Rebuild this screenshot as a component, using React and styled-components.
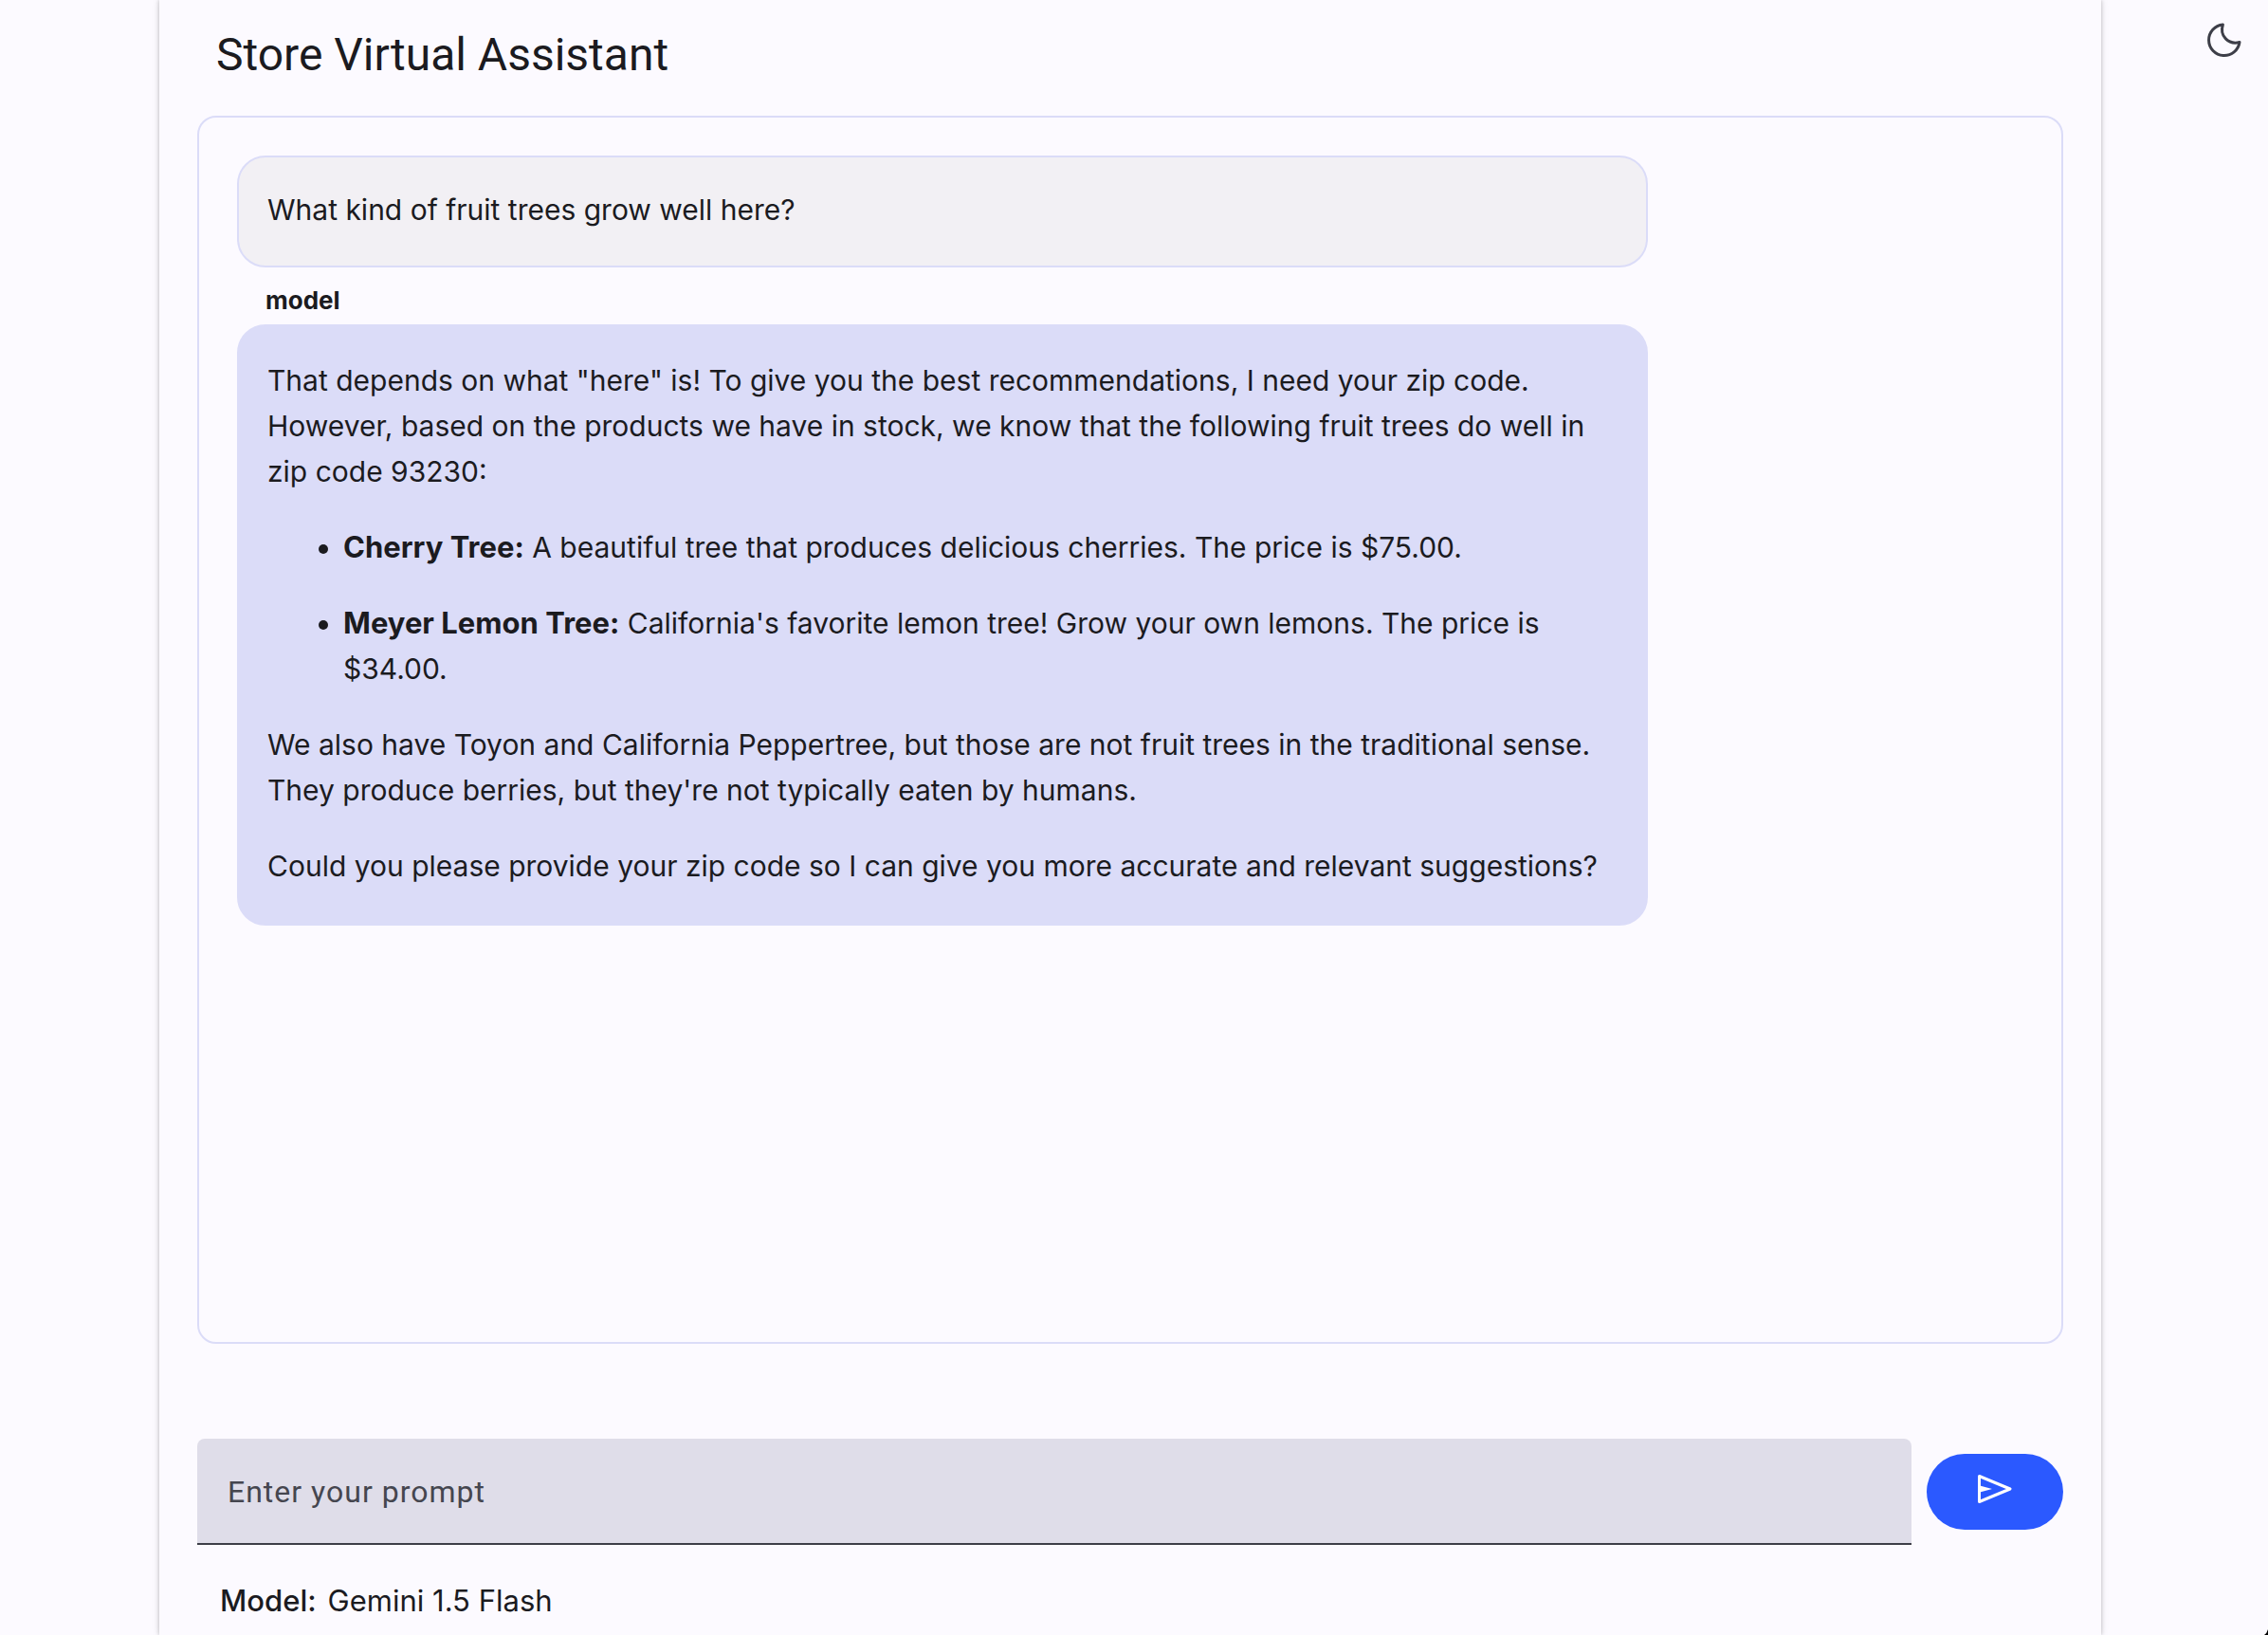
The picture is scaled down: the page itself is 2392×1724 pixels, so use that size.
import React from 'react';
import styled, { createGlobalStyle, css } from 'styled-components';

const GlobalStyle = createGlobalStyle`
  * { box-sizing: border-box; }
  html, body, #root { height: 100%; }
  body {
    margin: 0;
    overflow: hidden;
    background: #fcfaff;
    color: #1b1b1f;
    font-family: Inter, "Liberation Sans", sans-serif;
    font-size: 31px;
    line-height: 48px;
  }
  p, ul, h1 { margin: 0; }
  button, input { font: inherit; }
`;

const Page = styled.div`
  position: relative;
  min-height: 100%;
  display: flex;
  justify-content: center;
  padding-right: 8px;
  overflow: hidden;
`;

const Sheet = styled.main`
  width: 86%;
  max-width: 2048px;
  min-height: 100vh;
  display: flex;
  flex-direction: column;
  padding: 0 40px;
  background: #fcfaff;
  box-shadow: 0 0 4px rgba(0, 0, 0, 0.2), 0 0 8px rgba(0, 0, 0, 0.12);
`;

const Title = styled.h1`
  padding: 26px 20px 32px;
  font-family: Roboto, sans-serif;
  font-size: 48px;
  font-weight: 400;
  line-height: 64px;
`;

const Conversation = styled.section`
  flex: 0 0 auto;
  height: 76vh;
  max-height: 1295px;
  display: flex;
  flex-direction: column;
  align-items: flex-start;
  padding: 40px;
  border: 2px solid #dbdcf8;
  border-radius: 20px;
`;

const Bubble = styled.div`
  width: 79%;
  display: flex;
  flex-direction: column;
  gap: 32px;
  border: 2px solid #dbdcf8;
  border-radius: 30px;
  font-size: 30px;
  ${({ $from }) =>
    $from === 'model'
      ? css`
          padding: 33px 30px 37px;
          background: #dbdcf8;
        `
      : css`
          padding: 31px 30px 35px;
          background: #f2f0f4;
        `}
`;

const Speaker = styled.div`
  padding: 19px 30px 9px;
  font-size: 26px;
  font-weight: 700;
  line-height: 32px;
`;

const List = styled.ul`
  display: flex;
  flex-direction: column;
  gap: 32px;
  padding-left: 80px;
`;

const ProductName = styled.strong`
  font-size: 31px;
  line-height: 1;
`;

const PromptForm = styled.form`
  display: flex;
  align-items: center;
  gap: 16px;
  margin-top: 100px;
`;

const PromptInput = styled.input`
  flex: 1;
  min-width: 0;
  height: 112px;
  padding: 2px 32px 0;
  border: 0;
  border-bottom: 2px solid #3d3e48;
  border-radius: 8px 8px 0 0;
  background: #dfdde9;
  color: #1b1b1f;
  font-family: Roboto, sans-serif;
  font-size: 32px;
  letter-spacing: 1px;
  outline: none;
  &::placeholder { color: #45464f; opacity: 1; }
`;

const SendButton = styled.button`
  width: 144px;
  height: 80px;
  display: flex;
  align-items: center;
  justify-content: center;
  padding: 0 0 6px;
  border: 0;
  border-radius: 40px;
  background: #2b59ff;
  color: #fff;
`;

const ModelInfo = styled.p`
  display: flex;
  gap: 12px;
  padding: 35px 24px 0;
`;

const Label = styled.span`
  font-weight: 500;
`;

const ThemeButton = styled.button`
  position: absolute;
  top: 0;
  right: 4px;
  width: 84px;
  height: 84px;
  display: flex;
  align-items: center;
  justify-content: center;
  padding: 0;
  border: 0;
  background: none;
  color: #3d3e48;
`;

const WindowCorner = styled.svg`
  position: absolute;
  right: 0;
  bottom: 0;
`;

function MoonIcon() {
  return (
    <svg width="40" height="40" viewBox="0 0 40 40" fill="none" stroke="currentColor" strokeWidth="3" strokeLinejoin="round" aria-hidden="true">
      <path d="M18.4 4 A16.3 16.3 0 1 0 36 22.5 C24.5 25.5 14.5 16 18.4 4 Z" />
    </svg>
  );
}

function SendIcon() {
  return (
    <svg width="36" height="30" viewBox="0 0 36 30" aria-hidden="true">
      <path d="M1.5 1.5 L34 15 L1.5 28.5 Z" fill="none" stroke="currentColor" strokeWidth="3" strokeLinejoin="round" />
      <path d="M2 11.5 L15 15 L2 18.5 Z" fill="currentColor" />
    </svg>
  );
}

export default function App() {
  return (
    <Page>
      <GlobalStyle />
      <Sheet>
        <Title>Store Virtual Assistant</Title>
        <Conversation aria-label="Conversation">
          <Bubble $from="user">
            <p>What kind of fruit trees grow well here?</p>
          </Bubble>
          <Speaker>model</Speaker>
          <Bubble $from="model">
            <p>
              That depends on what "here" is! To give you the best recommendations, I need your zip code.
              However, based on the products we have in stock, we know that the following fruit trees do well in
              zip code 93230:
            </p>
            <List>
              <li>
                <ProductName>Cherry Tree:</ProductName> A beautiful tree that produces delicious cherries. The price is
                $75.00.
              </li>
              <li>
                <ProductName>Meyer Lemon Tree:</ProductName> California's favorite lemon tree! Grow your own lemons.
                The price is $34.00.
              </li>
            </List>
            <p>
              We also have Toyon and California Peppertree, but those are not fruit trees in the traditional sense.
              They produce berries, but they're not typically eaten by humans.
            </p>
            <p>Could you please provide your zip code so I can give you more accurate and relevant suggestions?</p>
          </Bubble>
        </Conversation>
        <PromptForm onSubmit={(event) => event.preventDefault()}>
          <PromptInput type="text" aria-label="Enter your prompt" placeholder="Enter your prompt" />
          <SendButton type="submit" aria-label="Send">
            <SendIcon />
          </SendButton>
        </PromptForm>
        <ModelInfo>
          <Label>Model:</Label>
          <span>Gemini 1.5 Flash</span>
        </ModelInfo>
      </Sheet>
      <ThemeButton type="button" aria-label="Switch to dark theme">
        <MoonIcon />
      </ThemeButton>
      <WindowCorner width="4" height="6" viewBox="0 0 4 6" aria-hidden="true">
        <path d="M4 0 L4 6 L0 6 Q3 4 4 0 Z" fill="#000" />
      </WindowCorner>
    </Page>
  );
}
